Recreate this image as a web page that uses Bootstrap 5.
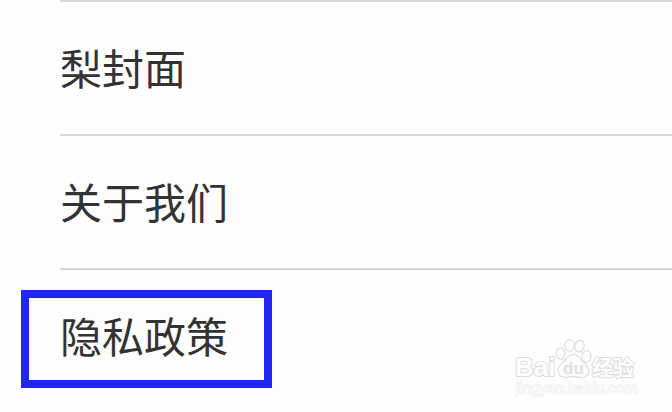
<!DOCTYPE html>
<html lang="zh-CN">
<head>
<meta charset="utf-8">
<meta name="viewport" content="width=device-width, initial-scale=1">
<title>设置</title>
<link href="https://cdn.jsdelivr.net/npm/bootstrap@5.3.0/dist/css/bootstrap.min.css" rel="stylesheet">
<style>
  body { background: #fefefe; font-family: "Noto Sans CJK SC", sans-serif; }
  .settings-menu { padding-left: 60px; }
  .settings-item { border-top: 2px solid #d8d8d8; }
  .settings-link { color: #333; font-size: 42px; line-height: 60px; padding: 35px 0 37px; }
  .highlight-frame { top: 20px; bottom: 14px; left: -39px; width: 251px; border: 8px solid #2226f2; pointer-events: none; }
  .site-mark { right: 32px; bottom: 8px; }
</style>
</head>
<body>
<main class="position-relative min-vh-100 overflow-hidden">
  <nav class="settings-menu" aria-label="设置">
    <ul class="list-unstyled mb-0">
      <li class="settings-item"><a class="settings-link d-block text-decoration-none" href="#cover">梨封面</a></li>
      <li class="settings-item"><a class="settings-link d-block text-decoration-none" href="#about">关于我们</a></li>
      <li class="settings-item position-relative">
        <a class="settings-link d-block text-decoration-none" href="#privacy">隐私政策</a>
        <span class="highlight-frame position-absolute"></span>
      </li>
    </ul>
  </nav>
  <svg class="site-mark position-absolute" width="128" height="68" viewBox="512 336 128 68" role="img" aria-label="Baidu 经验">
    <g fill="#fefefe" stroke="#dcdcdc" stroke-width="1.2" stroke-linejoin="round">
      <text x="515" y="376" font-family="Liberation Sans, Arial, sans-serif" font-weight="700" font-size="26" stroke-width="2" paint-order="stroke">Bai</text>
      <ellipse cx="560.5" cy="353.5" rx="4.4" ry="5.6" transform="rotate(-8 560.5 353.5)"/>
      <ellipse cx="569.5" cy="345.5" rx="4.6" ry="6"/>
      <ellipse cx="579.5" cy="346" rx="4.6" ry="6" transform="rotate(12 579.5 346)"/>
      <ellipse cx="586.5" cy="356.5" rx="4.6" ry="5.8" transform="rotate(10 586.5 356.5)"/>
      <path d="M573 354.5C568 354.5 566.5 358.5 563.5 361.5C560 365 557.5 367 558 371.5C558.500 376 562 378 566.5 377.3C571 376.5 575 376.5 579.5 377.3C585 378.3 588.5 375.5 588.7 371C589 366.5 585.5 364.5 582.5 361C579.5 357.5 578 354.5 573 354.5Z"/>
      <text x="563" y="374" font-family="Liberation Sans, Arial, sans-serif" font-weight="700" font-size="17" fill="#e0e0e0" stroke="none">du</text>
      <text x="592" y="375" font-family="Noto Sans CJK SC, sans-serif" font-weight="700" font-size="21" stroke-width="2" paint-order="stroke">经验</text>
      <text x="516" y="393" font-family="Liberation Sans, Arial, sans-serif" font-size="15" stroke="#e6e6e6" stroke-width="1" paint-order="stroke">jingyan.baidu.com</text>
    </g>
  </svg>
</main>
<script src="https://cdn.jsdelivr.net/npm/bootstrap@5.3.0/dist/js/bootstrap.bundle.min.js"></script>
</body>
</html>
